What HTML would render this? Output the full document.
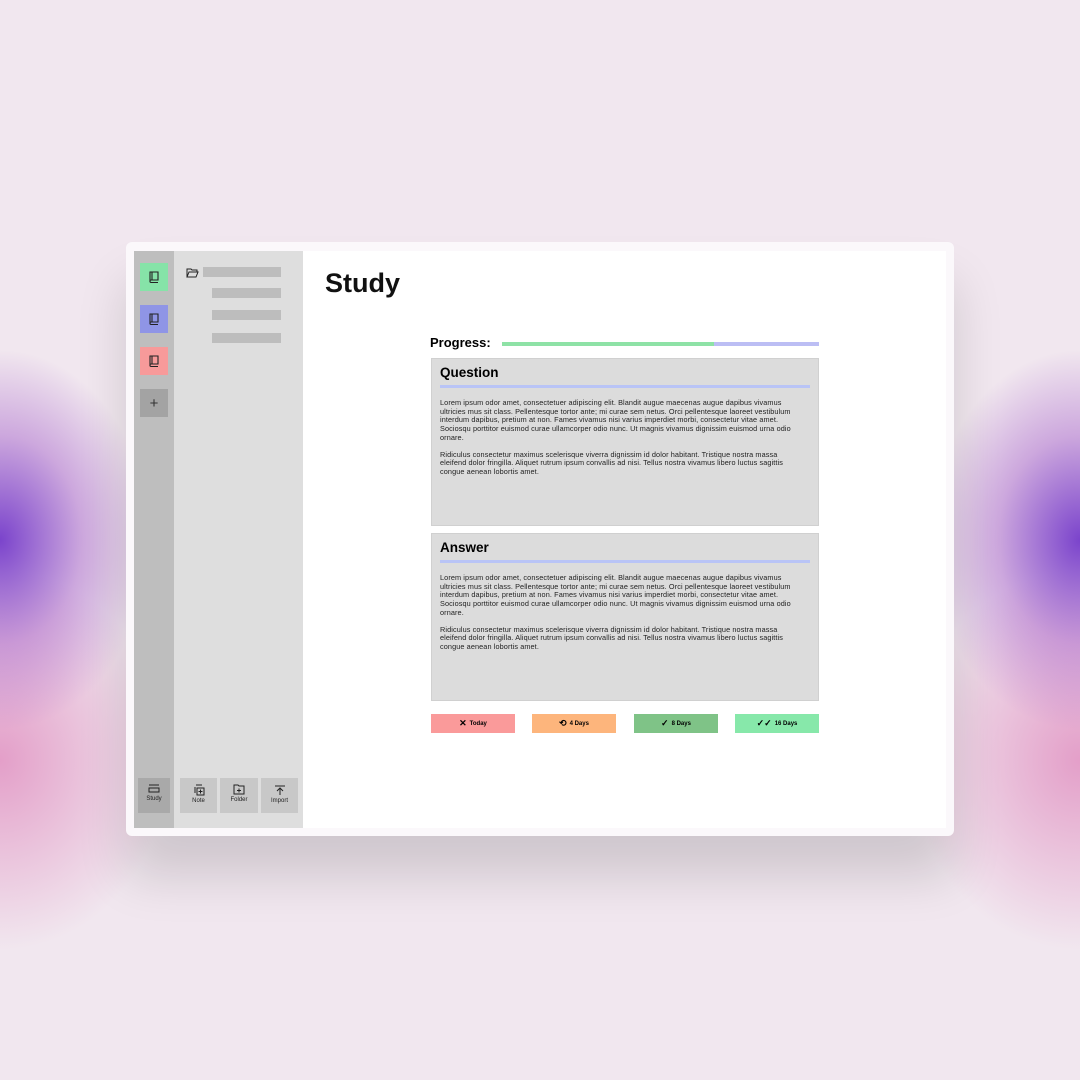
<!DOCTYPE html>
<html><head><style>
*{margin:0;padding:0;box-sizing:border-box}
body{width:1080px;height:1080px;overflow:hidden;font-family:"Liberation Sans",sans-serif;position:relative;
background:
radial-gradient(ellipse 150px 190px at 0px 540px,rgba(110,50,200,.9),rgba(160,90,200,.45) 55%,rgba(240,230,238,0) 100%),
radial-gradient(ellipse 150px 190px at 1080px 540px,rgba(110,50,200,.9),rgba(160,90,200,.45) 55%,rgba(240,230,238,0) 100%),
radial-gradient(ellipse 170px 190px at 0px 760px,rgba(220,120,180,.65),rgba(240,230,238,0) 100%),
radial-gradient(ellipse 170px 190px at 1080px 760px,rgba(220,120,180,.65),rgba(240,230,238,0) 100%),
#f1e7ef}
.frame{position:absolute;left:126px;top:242px;width:828px;height:594px;background:#fbf8fb;border-radius:6px;box-shadow:0 40px 50px rgba(0,0,0,.14)}
.inner{position:absolute;left:8px;top:9px;width:812px;height:577px;background:#fff;overflow:hidden}
.s1{position:absolute;left:0;top:0;width:40px;height:100%;background:#bebebe}
.s2{position:absolute;left:40px;top:0;width:129px;height:100%;background:#dedede}
.ib{position:absolute;left:6px;width:28px;height:28px;display:flex;align-items:center;justify-content:center}
.bar{position:absolute;height:10px;background:#bdbdbd}
.bb{position:absolute;top:527px;height:35px;background:#c8c8c8;font-size:6px;color:#222;text-align:center}
.bb svg{display:block;margin:6px auto 2px}
h1{position:absolute;left:191px;top:17px;font-size:27px;font-weight:bold;color:#111}
.prog{position:absolute;left:296px;top:84px;font-size:13px;font-weight:bold}
.card{position:absolute;left:297px;width:388px;background:#dcdcdc;border:1px solid #d0d0d0}
.card h2{font-size:13.5px;font-weight:bold;margin:6px 0 0 8px}
.card .ln{height:3px;background:#b9c4f6;margin:5px 8px 0 8px}
.card p{font-size:7.3px;line-height:8.7px;letter-spacing:.1px;color:#222;margin:11px 24px 0 8px}
.card p+p{margin-top:8px}
.btn{position:absolute;top:463px;width:84px;height:19px;font-size:6px;font-weight:bold;display:flex;align-items:center;justify-content:center;gap:3px}
</style></head><body>
<div class="frame"><div class="inner">
<div class="s1">
<div class="ib" style="top:12px;background:#86e3a8"><svg width="14" height="14" viewBox="0 0 14 14" fill="none" stroke="#222" stroke-width="1.1"><path d="M3 11.5V2h8v8H4.2a1.2 1.2 0 000 2.5H11M5 2v8"/></svg></div>
<div class="ib" style="top:54px;background:#8f95e6"><svg width="14" height="14" viewBox="0 0 14 14" fill="none" stroke="#222" stroke-width="1.1"><path d="M3 11.5V2h8v8H4.2a1.2 1.2 0 000 2.5H11M5 2v8"/></svg></div>
<div class="ib" style="top:96px;background:#f79a9a"><svg width="14" height="14" viewBox="0 0 14 14" fill="none" stroke="#222" stroke-width="1.1"><path d="M3 11.5V2h8v8H4.2a1.2 1.2 0 000 2.5H11M5 2v8"/></svg></div>
<div class="ib" style="top:138px;background:#a3a3a3;font-size:15px;color:#333">+</div>
<div class="bb" style="left:4px;width:32px;background:#a9a9a9;top:527px"><svg width="12" height="10" viewBox="0 0 12 10" fill="none" stroke="#222"><path d="M1 1h10M1 4h10v4H1z"/></svg>Study</div>
</div>
<div class="s2">
<svg style="position:absolute;left:12px;top:17px" width="13" height="10" viewBox="0 0 13 10" fill="none" stroke="#222"><path d="M1 9V1h4l1 1h5v2M1 9l2-5h9l-2 5z"/></svg>
<div class="bar" style="left:29px;top:16px;width:78px"></div>
<div class="bar" style="left:38px;top:37px;width:69px"></div>
<div class="bar" style="left:38px;top:59px;width:69px"></div>
<div class="bar" style="left:38px;top:82px;width:69px"></div>
<div class="bb" style="left:6px;width:37px"><svg width="12" height="12" viewBox="0 0 12 12" fill="none" stroke="#222"><path d="M2 9V3M4 11V4h7v7zM7.5 5.5v4M5.5 7.5h4M3 1h6"/></svg>Note</div>
<div class="bb" style="left:46px;width:38px"><svg width="12" height="11" viewBox="0 0 12 11" fill="none" stroke="#222"><path d="M1 10V1h4l1 1h5v8zM6 4.5v4M4 6.5h4"/></svg>Folder</div>
<div class="bb" style="left:87px;width:37px"><svg width="12" height="12" viewBox="0 0 12 12" fill="none" stroke="#222"><path d="M1 2h10M6 11V4M3 7l3-3 3 3"/></svg>Import</div>
</div>
<h1>Study</h1>
<div class="prog">Progress:</div>
<div style="position:absolute;left:368px;top:91px;width:212px;height:4px;background:#8ee2a6"></div>
<div style="position:absolute;left:580px;top:91px;width:105px;height:4px;background:#bcbef4"></div>
<div class="card" style="top:107px;height:168px"><h2>Question</h2><div class="ln"></div>
<p>Lorem ipsum odor amet, consectetuer adipiscing elit. Blandit augue maecenas augue dapibus vivamus ultricies mus sit class. Pellentesque tortor ante; mi curae sem netus. Orci pellentesque laoreet vestibulum interdum dapibus, pretium at non. Fames vivamus nisi varius imperdiet morbi, consectetur vitae amet. Sociosqu porttitor euismod curae ullamcorper odio nunc. Ut magnis vivamus dignissim euismod urna odio ornare.</p>
<p>Ridiculus consectetur maximus scelerisque viverra dignissim id dolor habitant. Tristique nostra massa eleifend dolor fringilla. Aliquet rutrum ipsum convallis ad nisi. Tellus nostra vivamus libero luctus sagittis congue aenean lobortis amet.</p></div>
<div class="card" style="top:282px;height:168px"><h2>Answer</h2><div class="ln"></div>
<p>Lorem ipsum odor amet, consectetuer adipiscing elit. Blandit augue maecenas augue dapibus vivamus ultricies mus sit class. Pellentesque tortor ante; mi curae sem netus. Orci pellentesque laoreet vestibulum interdum dapibus, pretium at non. Fames vivamus nisi varius imperdiet morbi, consectetur vitae amet. Sociosqu porttitor euismod curae ullamcorper odio nunc. Ut magnis vivamus dignissim euismod urna odio ornare.</p>
<p>Ridiculus consectetur maximus scelerisque viverra dignissim id dolor habitant. Tristique nostra massa eleifend dolor fringilla. Aliquet rutrum ipsum convallis ad nisi. Tellus nostra vivamus libero luctus sagittis congue aenean lobortis amet.</p></div>
<div class="btn" style="left:297px;background:#fa9a9a"><span style="font-size:9px">✕</span>Today</div>
<div class="btn" style="left:398px;background:#fdb57c"><span style="font-size:9px">⟲</span>4 Days</div>
<div class="btn" style="left:500px;background:#7fc387"><span style="font-size:9px">✓</span>8 Days</div>
<div class="btn" style="left:601px;background:#87e8aa"><span style="font-size:9px">✓✓</span>16 Days</div>
</div></div>
</body></html>
